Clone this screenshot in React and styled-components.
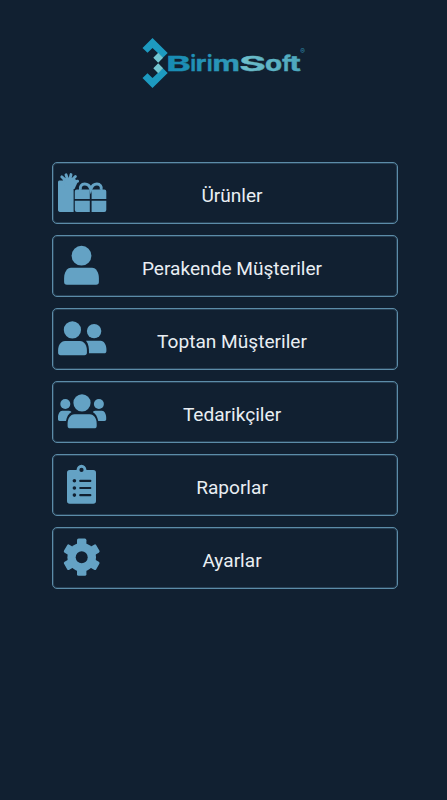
import React from 'react';
import styled, { createGlobalStyle } from 'styled-components';

const GiftIcon = () => (
  <Icon viewBox="0 0 49 48">
    <path d="M1.600 11.500h14v31.400H1.800c-1.100 0-1.800-.7-1.800-1.800V13.100c0-.9.7-1.600 1.600-1.600z" />
    <path d="M4.500 10h12.500l3 2.500-3.500 7.500h-9z" />
    <path
      d="M11 14L3.800 7.900M11 14L8 5.800M11 14L13 5.600M11 14L17.400 7.500M11 14L19.600 12.200"
      fill="none"
      stroke="currentColor"
      strokeWidth="2.900"
      strokeLinecap="round"
    />
    <path
      d="M18.800 20.600H31.800V30H16.800V22.600a2 2 0 0 1 2-2zM33.600 20.600h12.700a2 2 0 0 1 2 2V30H33.600zM16.800 31.800h15v11.100h-13a2 2 0 0 1-2-2zM33.600 31.800h14.700v9.100a2 2 0 0 1-2 2H33.600z"
    />
    <path
      d="M22.500 20.800c-1-3.600 1.200-5.700 4.200-5.700 3.400 0 5.200 2.300 6.100 5.300 1-3 2.800-5.300 6.100-5.300 3 0 5.200 2.100 4.200 5.700"
      fill="none"
      stroke="currentColor"
      strokeWidth="3"
    />
  </Icon>
);

const PersonIcon = () => (
  <Icon viewBox="0 0 49 48">
    <circle cx="23.500" cy="13.700" r="9.900" />
    <path d="M13 25.800h21c4.200 0 6.900 5 6.900 10.200v4c0 1.700-1 2.700-2.700 2.700H8.800c-1.700 0-2.700-1-2.700-2.700v-4c0-5.200 2.700-10.200 6.900-10.200z" />
  </Icon>
);

const PeopleIcon = () => (
  <Icon viewBox="0 0 49 48">
    <circle cx="14.400" cy="14.900" r="8.600" />
    <path d="M7 26h15c4.200 0 6.900 4.600 6.900 9.200v2.600c0 1.500-.9 2.400-2.400 2.400h-24C1 40.200.1 39.300.1 37.800v-2.600C.1 30.600 2.800 26 7 26z" />
    <circle cx="36.100" cy="16.100" r="7.200" />
    <path d="M28 25.700h14.600c3.500 0 5.800 4.400 5.800 8.200v2c0 1.500-.8 2.300-2.300 2.300H31c.1-5.200-.4-9.300-3-12.500z" />
  </Icon>
);

const GroupIcon = () => (
  <Icon viewBox="0 0 49 48">
    <circle cx="24" cy="14.800" r="8.600" />
    <path d="M16.500 26.200h15.200c4.300 0 7 4.600 7 9.200v2.500c0 1.500-.9 2.400-2.400 2.400H12c-1.500 0-2.400-.9-2.400-2.400v-2.500c0-4.600 2.700-9.200 6.900-9.200z" />
    <circle cx="7.300" cy="16" r="5" />
    <circle cx="40.900" cy="16" r="5" />
    <path d="M4.200 22.700h6.600c1 0 1.800.4 2.700 1.200C10.600 25.600 8.600 28.800 8 33H1.700C.6 33 0 32.400 0 31.300v-1.800c0-3.400 1.800-6.800 4.200-6.800zM44 22.700h-6.600c-1 0-1.800.4-2.700 1.200 2.900 1.700 4.900 4.900 5.500 9.100h6.300c1.100 0 1.700-.6 1.700-1.700v-1.800c0-3.400-1.800-6.800-4.200-6.800z" />
  </Icon>
);

const ClipboardIcon = () => (
  <Icon viewBox="0 0 49 48">
    <path
      fillRule="evenodd"
      d="M11.700 9h6.800c.4-3.100 2.200-5.200 5-5.200s4.600 2.100 5 5.200h6.800c1.700 0 2.700 1 2.700 2.700V40c0 1.700-1 2.700-2.700 2.700H11.700C10 42.700 9 41.700 9 40V11.700C9 10 10 9 11.700 9zM23.500 6.800a2.100 2.100 0 1 0 0 4.200 2.100 2.100 0 0 0 0-4.200z"
    />
    <g fill="#112031">
      <circle cx="16.400" cy="19.800" r="1.800" />
      <circle cx="16.400" cy="27" r="1.800" />
      <circle cx="16.400" cy="34.100" r="1.800" />
      <rect x="21.200" y="18.700" width="12.200" height="2.200" rx="1" />
      <rect x="21.200" y="25.900" width="12.200" height="2.200" rx="1" />
      <rect x="21.200" y="33" width="12.200" height="2.200" rx="1" />
    </g>
  </Icon>
);

const GearIcon = () => (
  <Icon viewBox="0 0 49 48">
    {[0, 60, 120].map((angle) => (
      <rect
        key={angle}
        x="19"
        y="4.600"
        width="9.400"
        height="37.200"
        rx="1.600"
        transform={`rotate(${angle} 23.700 23.200)`}
      />
    ))}
    <circle cx="23.700" cy="23.200" r="14.300" />
    <circle cx="23.700" cy="23.200" r="6" fill="#112031" />
  </Icon>
);

const menu = [
  { label: 'Ürünler', icon: <GiftIcon /> },
  { label: 'Perakende Müşteriler', icon: <PersonIcon /> },
  { label: 'Toptan Müşteriler', icon: <PeopleIcon /> },
  { label: 'Tedarikçiler', icon: <GroupIcon /> },
  { label: 'Raporlar', icon: <ClipboardIcon /> },
  { label: 'Ayarlar', icon: <GearIcon /> },
];

// every letter of the wordmark is stretched to its own width
const letters = [
  { char: 'B', x: 25.3, width: 24.5 },
  { char: 'i', x: 49.6, width: 5.4 },
  { char: 'r', x: 54.7, width: 10.5 },
  { char: 'i', x: 66.1, width: 5.4 },
  { char: 'm', x: 71.5, width: 27.4 },
  { char: 'S', x: 98.2, width: 26.6 },
  { char: 'o', x: 124, width: 17.2 },
  { char: 'f', x: 141.2, width: 8.6 },
  { char: 't', x: 148.6, width: 11.3 },
];

const BrandLogo = () => (
  <Logo viewBox="0 0 166 52">
    <defs>
      <linearGradient id="word" gradientUnits="userSpaceOnUse" x1="25" y1="0" x2="160" y2="0">
        <stop offset="0" stopColor="#168bb4" />
        <stop offset="0.540" stopColor="#3199b9" />
        <stop offset="0.545" stopColor="#70bfcb" />
        <stop offset="1" stopColor="#4ba6bc" />
      </linearGradient>
    </defs>
    <path d="M11.500 1L26.700 15.900l-4.800 4.800L11.500 10.900l-5 4.900-5-4.900z" fill="#1d9ac0" />
    <path d="M11.500 51L26.700 36.100l-4.800-4.800L11.500 41.100l-5-4.900-5 4.900z" fill="#1d9ac0" />
    <path d="M17.200 15.800l4.900 5-4.900 5-4.900-5z" fill="#74c6d2" />
    <path d="M17.200 26.200l4.900 5-4.900 5-4.900-5z" fill="#74c6d2" />
    <Word y="33.700" fill="url(#word)" stroke="url(#word)">
      {letters.map(({ char, x, width }) => (
        <tspan key={x} x={x} textLength={width} lengthAdjust="spacingAndGlyphs">
          {char}
        </tspan>
      ))}
    </Word>
    <Mark x="159.200" y="16.500">®</Mark>
  </Logo>
);

const App = () => {
  return (
    <>
      <GlobalStyle />
      <Container>
        <BrandLogo />
        <MenuList>
          {menu.map(({ label, icon }) => (
            <MenuButton key={label}>
              {icon}
              <Label>{label}</Label>
            </MenuButton>
          ))}
        </MenuList>
      </Container>
    </>
  );
};

const GlobalStyle = createGlobalStyle`
  body {
    margin: 0;
    background-color: #112031;
  }
`;

const Container = styled.main`
  box-sizing: border-box;
  display: flex;
  flex-direction: column;
  align-items: center;
  height: 800px;
  padding-top: 37px;
  background-color: #112031;
  font-family: Roboto, sans-serif;
`;

const Logo = styled.svg`
  width: 166px;
  height: 52px;
`;

const Word = styled.text`
  font-family: Inter, sans-serif;
  font-size: 20.5px;
  font-weight: 700;
  stroke-width: 0.4px;
`;

const Mark = styled.text`
  font-family: Inter, sans-serif;
  font-size: 7px;
  font-weight: 700;
  fill: #2c83a0;
`;

const MenuList = styled.nav`
  display: flex;
  flex-direction: column;
  gap: 11px;
  width: 346px;
  margin: 73px 0 0 3px;
`;

const MenuButton = styled.button`
  box-sizing: border-box;
  display: grid;
  grid-template-columns: 49px 1fr 35px;
  align-items: center;
  height: 62px;
  padding: 0 5px;

  border: 1px solid #5c8ca8;
  border-radius: 5px;
  background-color: transparent;
  box-shadow: inset 0 0 0 1px rgba(92, 140, 168, 0.3);

  color: #e9eef3;
  font-family: inherit;
`;

const Icon = styled.svg`
  width: 49px;
  height: 48px;
  color: #64a2c4;
  fill: currentColor;
`;

const Label = styled.span`
  padding-top: 6px;
  font-size: 19.1px;
  line-height: 24px;
  text-align: center;
  white-space: nowrap;
`;

export default App;
